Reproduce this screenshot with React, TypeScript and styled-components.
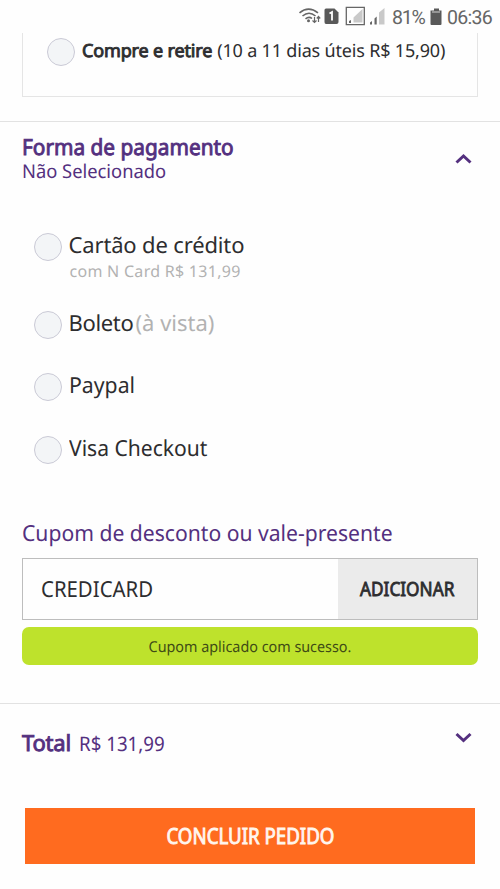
import React from 'react';
import styled, { createGlobalStyle } from 'styled-components';

const GlobalStyle = createGlobalStyle`
  *, *::before, *::after { box-sizing: border-box; }
  body {
    margin: 0;
    background: #fefefe;
    color: #2d2d2f;
    font-family: "Noto Sans", sans-serif;
    text-rendering: geometricPrecision;
  }
`;

const purple = '#54307f';

const Page = styled.main`
  height: 889px;
  overflow: hidden;
  display: flex;
  flex-direction: column;
`;

const StatusBar = styled.header`
  height: 33px;
  flex: none;
  padding-right: 7px;
  display: flex;
  justify-content: flex-end;
  align-items: flex-start;
  color: #666;
  font-family: Roboto, sans-serif;
  font-size: 19.5px;
  line-height: 35px;
`;

const StatusIcons = styled.svg`
  width: 94px;
  height: 33px;
`;

const Percent = styled.span`
  width: 37px;
  letter-spacing: -1.2px;
`;

const BatteryIcon = styled.svg`
  width: 18px;
  height: 33px;
`;

const Clock = styled.time`
  width: 46px;
  letter-spacing: -0.7px;
`;

const Text = styled.span<{ $size?: number; $track?: number; $strong?: boolean; $scale?: number; $center?: boolean }>`
  display: inline-block;
  font-size: ${p => p.$size ?? 22}px;
  letter-spacing: ${p => p.$track ?? 0}px;
  -webkit-text-stroke: ${p => (p.$strong ? '0.9px currentColor' : '0')};
  transform: ${p => (p.$scale ? `scaleX(${p.$scale})` : 'none')};
  transform-origin: ${p => (p.$center ? 'center' : 'left')};
  white-space: nowrap;
`;

const DeliveryCard = styled.section`
  height: 64px;
  flex: none;
  margin: 0 22px 24px;
  padding: 5px 0 0 24px;
  border: 1.5px solid #e5e5e5;
  border-top: 0;
  display: flex;
  align-items: flex-start;
  gap: 7px;
`;

const DeliveryLabel = styled.label`
  display: flex;
  gap: 5px;
  line-height: 27px;
`;

const Radio = styled.span`
  width: 28px;
  height: 28px;
  flex: none;
  border: 1.5px solid #cacad6;
  border-radius: 50%;
  background: #f3f5f7;
`;

const Section = styled.section<{ $height: number }>`
  height: ${p => p.$height}px;
  flex: none;
  border-top: 1.5px solid #e2e2e2;
  padding: 0 22px;
`;

const SectionHeader = styled.div<{ $top: number }>`
  padding-top: ${p => p.$top}px;
  display: flex;
  justify-content: space-between;
  color: ${purple};
`;

const HeadingStack = styled.div`
  display: flex;
  flex-direction: column;
  line-height: 24px;
`;

const TotalLine = styled.div`
  display: flex;
  align-items: baseline;
  gap: 8px;
  line-height: 26px;
`;

const Chevron = styled.svg<{ $offset: number }>`
  width: 17px;
  height: 11px;
  margin: ${p => p.$offset}px 6px 0 0;
  fill: none;
  stroke: ${purple};
  stroke-width: 3;
`;

const Options = styled.div`
  padding: 50.5px 0 0 12px;
`;

const Option = styled.label<{ $height?: number }>`
  height: ${p => p.$height ?? 62.5}px;
  display: flex;
  gap: 6.5px;
  line-height: 24px;
`;

const OptionBody = styled.span`
  display: flex;
  flex-direction: column;
`;

const OptionTitle = styled.span`
  display: flex;
  gap: 2px;
`;

const Muted = styled(Text)`
  color: #b2b2b2;
`;

const OptionNote = styled(Muted)`
  margin-top: 4px;
  padding-left: 1px;
  line-height: 20px;
`;

const CouponTitle = styled.h2`
  margin: 22.5px 0 13.5px;
  font-weight: 400;
  line-height: 24px;
  font-size: 22px;
  display: flex;
  color: ${purple};
`;

const CouponField = styled.div`
  height: 62px;
  border: 1.5px solid #bdbdbd;
  display: flex;
`;

const CouponValue = styled.div`
  flex: 1;
  padding: 0 0 0 17.5px;
  line-height: 61px;
`;

const AddButton = styled.button`
  width: 139px;
  border: 0;
  padding: 0;
  background: #ebebeb;
  color: #2d2d2f;
  font-family: inherit;
  line-height: 58px;
`;

const Success = styled.div`
  height: 37.5px;
  margin-top: 7px;
  border-radius: 7px;
  background: #bee22c;
  color: #3f4b16;
  text-align: center;
  line-height: 39px;
`;

const SubmitButton = styled.button`
  height: 55.5px;
  flex: none;
  margin: 0 25px;
  padding: 1px 0 0;
  border: 0;
  background: #ff6b1f;
  color: #fff6ee;
  font-family: inherit;
  line-height: 55px;
`;

export default function App() {
  return (
    <>
      <GlobalStyle />
      <Page>
        <StatusBar>
          <StatusIcons viewBox="298 0 94 33">
            <g fill="none" stroke="#666" strokeWidth="1.6">
              <path d="M299.500 12.800Q308.500 5.500 318 12.800M302.500 16Q309 10.500 315.500 16M305.500 18.800Q309 16 312 18.500" />
              <path d="M314.500 17v5.500M312.500 20.500l2 2 2-2M318.500 22v-5.500M316.800 18.500l1.700-2 1.700 2" strokeWidth="1.200" />
              <path d="M346.300 7.300h18v17.400h-18z" strokeWidth="1.300" />
            </g>
            <circle cx="308.500" cy="20.800" r="1.500" fill="#666" />
            <path d="M326 8.500h8.500l4 4V22q0 2-2 2H326q-1.500 0-1.500-2V10q0-1.500 1.500-1.500Z" fill="#595959" />
            <path d="M329.500 13.500l2.500-1.500v8.500" fill="none" stroke="#fff" strokeWidth="1.800" />
            <path d="M353.500 22.500v-5l9-8.500v13.500zM379 24.500V12.500l5.500-4.500v16.500z" fill="#c9c9c9" />
            <path d="M349 23v-2l2-1v3zM370 24.500v-2l2-1.500v3.500zM374.500 24.500v-6l2.200-2v8z" fill="#666" />
          </StatusIcons>
          <Percent>81%</Percent>
          <BatteryIcon viewBox="429 0 18 33">
            <path d="M434 8.500h5v2h2.500V24q0 1-1 1h-9q-1 0-1-1V10.500h3.500z" fill="#595959" />
            <path d="M432 12h8" stroke="#aaa" strokeWidth="1.500" />
          </BatteryIcon>
          <Clock>06:36</Clock>
        </StatusBar>

        <DeliveryCard>
          <Radio />
          <DeliveryLabel>
            <Text $size={18} $track={-0.15} $strong>Compre e retire</Text>
            <Text $size={18} $track={-0.18}>(10 a 11 dias úteis R$ 15,90)</Text>
          </DeliveryLabel>
        </DeliveryCard>

        <Section $height={582}>
          <SectionHeader $top={12.5}>
            <HeadingStack>
              <Text $scale={0.946} $strong>Forma de pagamento</Text>
              <Text $size={19} $scale={0.965}>Não Selecionado</Text>
            </HeadingStack>
            <Chevron $offset={18.5} viewBox="0 0 17 11">
              <path d="M1.500 9.500 8.500 3l7 6.500" />
            </Chevron>
          </SectionHeader>

          <Options>
            <Option $height={77.5}>
              <Radio />
              <OptionBody>
                <Text $track={-0.15}>Cartão de crédito</Text>
                <OptionNote $size={16} $track={0.28}>com N Card R$ 131,99</OptionNote>
              </OptionBody>
            </Option>
            <Option>
              <Radio />
              <OptionBody>
                <OptionTitle>
                  <Text $track={-0.33}>Boleto</Text>
                  <Muted>(à vista)</Muted>
                </OptionTitle>
              </OptionBody>
            </Option>
            <Option>
              <Radio />
              <OptionBody><Text $scale={0.966}>Paypal</Text></OptionBody>
            </Option>
            <Option>
              <Radio />
              <OptionBody><Text $scale={0.958}>Visa Checkout</Text></OptionBody>
            </Option>
          </Options>

          <CouponTitle><Text $scale={0.96}>Cupom de desconto ou vale-presente</Text></CouponTitle>
          <CouponField>
            <CouponValue><Text $scale={0.926}>CREDICARD</Text></CouponValue>
            <AddButton><Text $size={20.5} $scale={0.84} $strong $center>ADICIONAR</Text></AddButton>
          </CouponField>
          <Success><Text $size={15} $scale={0.957} $center>Cupom aplicado com sucesso.</Text></Success>
        </Section>

        <Section $height={105}>
          <SectionHeader $top={26}>
            <TotalLine>
              <Text $track={-0.2} $strong>Total</Text>
              <Text $size={20} $scale={0.935}>R$ 131,99</Text>
            </TotalLine>
            <Chevron $offset={2} viewBox="0 0 17 11">
              <path d="M1.500 2 8.500 8.500l7-6.500" />
            </Chevron>
          </SectionHeader>
        </Section>

        <SubmitButton><Text $size={21} $scale={0.89} $strong $center>CONCLUIR PEDIDO</Text></SubmitButton>
      </Page>
    </>
  );
}
